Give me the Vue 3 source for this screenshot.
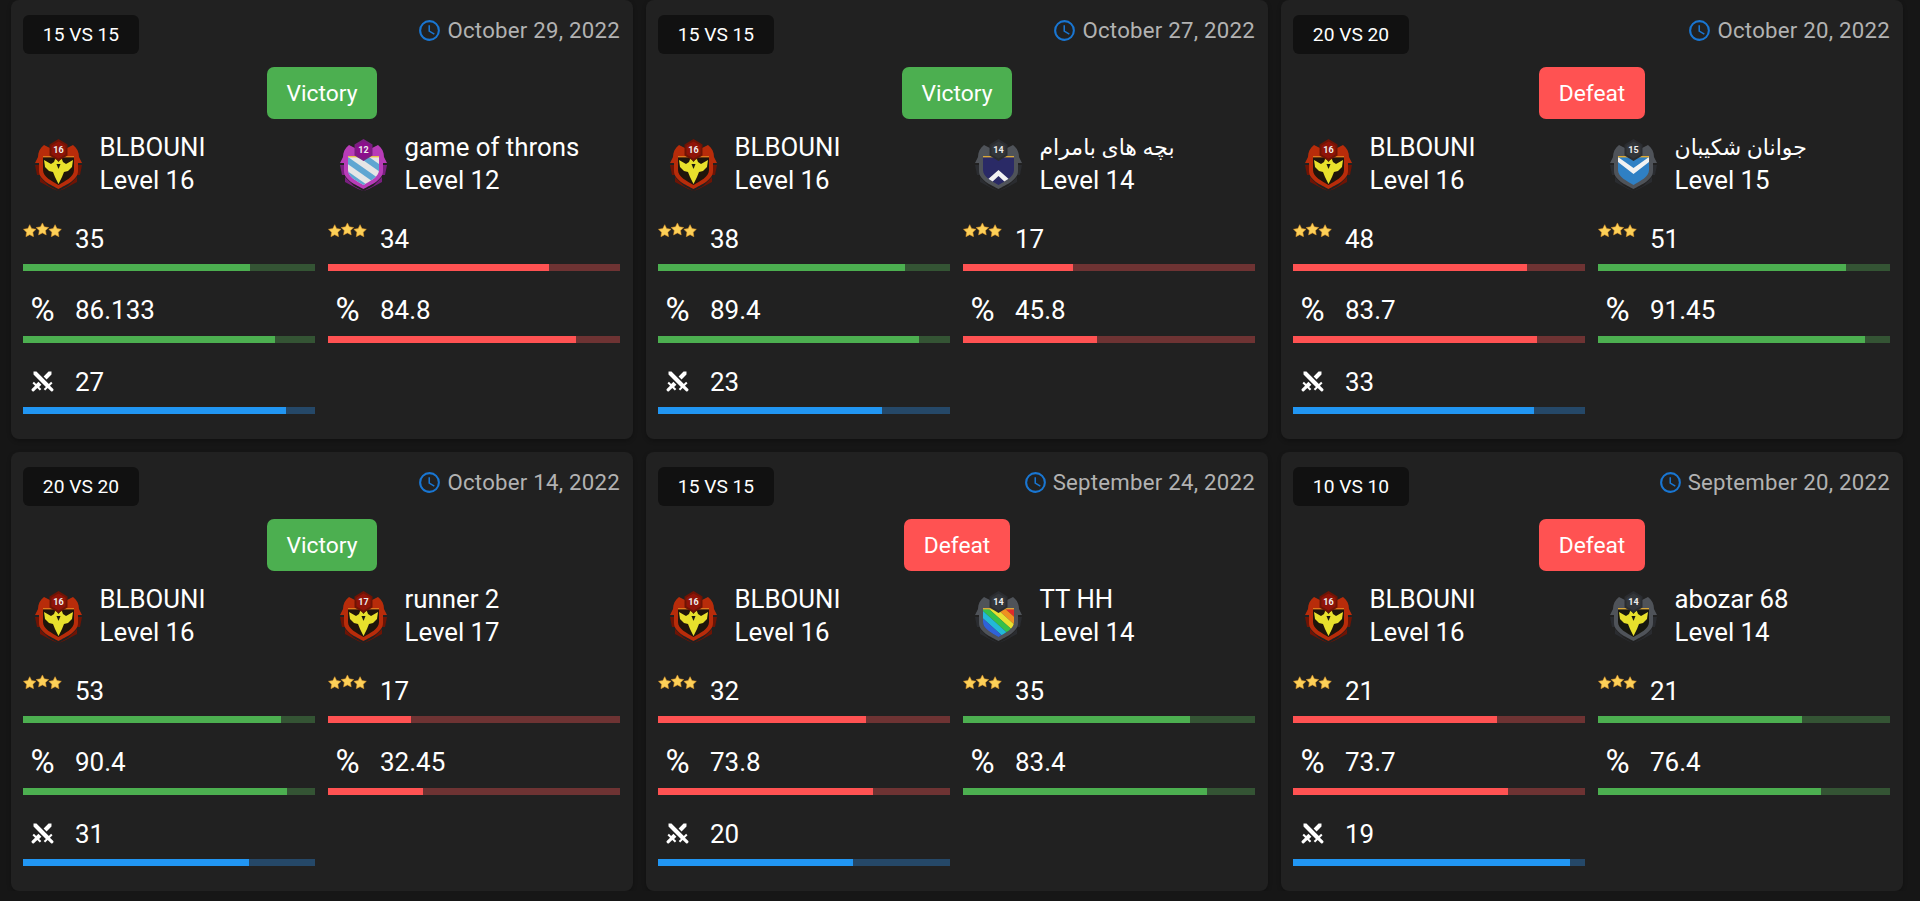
<script setup>
const crestKinds = {
  red: { frame: '#b82c0a', dark: '#6e1405', hex: '#8f1408', inner: '#1f150b', trim: '#e0781c', art: 'bird' },
  pink: { frame: '#b83cb8', dark: '#7a1f80', hex: '#8c0f8c', inner: '#e6e6e6', trim: '#e8c04a', art: 'stripes' },
  navy: { frame: '#4f5359', dark: '#2a2c30', hex: '#33363a', inner: '#2a2a66', trim: '#d9a93a', art: 'chevron-up' },
  blue: { frame: '#4f5359', dark: '#2a2c30', hex: '#33363a', inner: '#2f80c4', trim: '#e0aa30', art: 'chevron-down' },
  rainbow: { frame: '#4f5359', dark: '#2a2c30', hex: '#33363a', inner: '#444', trim: '#d9a93a', art: 'rainbow' },
  grey: { frame: '#4f5359', dark: '#2a2c30', hex: '#33363a', inner: '#17170f', trim: '#d9a93a', art: 'bird' }
}

const rainbow = ['#e02a2a', '#f09020', '#e8e030', '#35c04a', '#22b8d8', '#2f62d8', '#7a2fc0']

const matches = [
  {
    size: 15, date: 'October 29, 2022', result: 'Victory', attacks: 27,
    home: { name: 'BLBOUNI', level: 16, crest: 'red', stars: 35, pct: '86.133' },
    away: { name: 'game of throns', level: 12, crest: 'pink', stars: 34, pct: '84.8' }
  },
  {
    size: 15, date: 'October 27, 2022', result: 'Victory', attacks: 23,
    home: { name: 'BLBOUNI', level: 16, crest: 'red', stars: 38, pct: '89.4' },
    away: { name: 'بچه های بامرام', rtl: true, level: 14, crest: 'navy', stars: 17, pct: '45.8' }
  },
  {
    size: 20, date: 'October 20, 2022', result: 'Defeat', attacks: 33,
    home: { name: 'BLBOUNI', level: 16, crest: 'red', stars: 48, pct: '83.7' },
    away: { name: 'جوانان شکیبان', rtl: true, level: 15, crest: 'blue', stars: 51, pct: '91.45' }
  },
  {
    size: 20, date: 'October 14, 2022', result: 'Victory', attacks: 31,
    home: { name: 'BLBOUNI', level: 16, crest: 'red', stars: 53, pct: '90.4' },
    away: { name: 'runner 2', level: 17, crest: 'red', stars: 17, pct: '32.45' }
  },
  {
    size: 15, date: 'September 24, 2022', result: 'Defeat', attacks: 20,
    home: { name: 'BLBOUNI', level: 16, crest: 'red', stars: 32, pct: '73.8' },
    away: { name: 'TT HH', level: 14, crest: 'rainbow', stars: 35, pct: '83.4' }
  },
  {
    size: 10, date: 'September 20, 2022', result: 'Defeat', attacks: 19,
    home: { name: 'BLBOUNI', level: 16, crest: 'red', stars: 21, pct: '73.7' },
    away: { name: 'abozar 68', level: 14, crest: 'grey', stars: 21, pct: '76.4' }
  }
]

function sides(m) {
  const won = m.result === 'Victory'
  return [
    { ...m.home, id: 'h', tone: won ? 'green' : 'red', starWidth: (m.home.stars / (m.size * 3)) * 100, attackWidth: (m.attacks / (m.size * 2)) * 100, attacks: m.attacks },
    { ...m.away, id: 'a', tone: won ? 'red' : 'green', starWidth: (m.away.stars / (m.size * 3)) * 100 }
  ]
}
</script>

<template>
  <main class="page">
    <article v-for="(m, i) in matches" :key="i" class="card">
      <header class="card-top">
        <span class="size-tag">{{ m.size }} VS {{ m.size }}</span>
        <span class="date">
          <svg class="clock" viewBox="0 0 24 24"><path d="M12,20A8,8 0 0,0 20,12A8,8 0 0,0 12,4A8,8 0 0,0 4,12A8,8 0 0,0 12,20M12,2A10,10 0 0,1 22,12A10,10 0 0,1 12,22C6.47,22 2,17.5 2,12A10,10 0 0,1 12,2M12.5,7V12.25L17,14.92L16.25,16.15L11,13V7H12.5Z" /></svg>
          {{ m.date }}
        </span>
      </header>

      <div class="result-row">
        <span class="result" :class="m.result === 'Victory' ? 'win' : 'lose'">{{ m.result }}</span>
      </div>

      <div class="sides">
        <section v-for="s in sides(m)" :key="s.id" class="side">
          <div class="clan">
            <svg class="crest" viewBox="0 0 49 52">
              <defs>
                <clipPath :id="`shield-${i}-${s.id}`">
                  <path d="M9 17H40V31C40 38 31 42 24.5 46 18 42 9 38 9 31Z" />
                </clipPath>
              </defs>
              <!-- shoulders and side flanges -->
              <path d="M4 18C4 13 6 9 10 6L20 11V16H10L8 24H1ZM45 18C45 13 43 9 39 6L29 11V16H39L41 24H48Z" :fill="crestKinds[s.crest].frame" />
              <path d="M1 26H6V36H3ZM48 26H43V36H46Z" :fill="crestKinds[s.crest].dark" />
              <path d="M6 38 15 47 24.5 52 34 47 43 38 43 43 30 50 24.5 52 19 50 6 43Z" :fill="crestKinds[s.crest].dark" />
              <path d="M5 14H44V32C44 41 32 46 24.5 50 17 46 5 41 5 32Z" :fill="crestKinds[s.crest].frame" />
              <path d="M9 17H40V31C40 38 31 42 24.5 46 18 42 9 38 9 31Z" :fill="crestKinds[s.crest].inner" />
              <g :clip-path="`url(#shield-${i}-${s.id})`">
                <template v-if="crestKinds[s.crest].art === 'bird'">
                  <path d="M10 21 17 25 20 23 21.5 19 24.5 23 27.5 19 29 23 32 25 39 21 38 28 34 32 30 33 28 38 24.5 45 21 38 19 33 15 32 11 28Z" fill="#e8e02c" />
                  <path d="M22.5 25H26.5L24.5 30Z" fill="#17170f" />
                </template>
                <g v-else-if="crestKinds[s.crest].art === 'stripes'" transform="rotate(35 24.5 30)" fill="#5fa6d2">
                  <rect x="0" y="17" width="50" height="6" />
                  <rect x="0" y="29" width="50" height="6" />
                  <rect x="0" y="41" width="50" height="6" />
                </g>
                <path v-else-if="crestKinds[s.crest].art === 'chevron-up'" d="M12 42 24.5 31 37 42 33 45 24.5 37 16 45Z" fill="#f2f2f2" />
                <path v-else-if="crestKinds[s.crest].art === 'chevron-down'" d="M9 18 24.5 29 40 18V23L24.5 35 9 23Z" fill="#f2f2f2" />
                <g v-else transform="rotate(42 24.5 30)">
                  <rect v-for="(c, n) in rainbow" :key="n" x="0" :y="11 + n * 5.5" width="50" height="5.5" :fill="c" />
                </g>
              </g>
              <path d="M9 17H40V18.4H9Z" :fill="crestKinds[s.crest].trim" />
              <polygon points="24.5,0 33.5,5.5 33.5,16.5 24.5,22 15.5,16.5 15.5,5.5" :fill="crestKinds[s.crest].dark" />
              <polygon points="24.5,2.5 31.5,6.5 31.5,15.5 24.5,19.5 17.5,15.5 17.5,6.5" :fill="crestKinds[s.crest].hex" />
              <text class="crest-level" x="24.5" y="14.3" text-anchor="middle">{{ s.level }}</text>
            </svg>
            <div class="clan-text">
              <div class="clan-name" :class="{ rtl: s.rtl }">{{ s.name }}</div>
              <div>Level {{ s.level }}</div>
            </div>
          </div>

          <div class="stat">
            <div class="stat-row">
              <span class="stat-icon stars">
                <svg width="40" height="15" viewBox="0 0 40 15">
                  <g fill="#fdd058" stroke="#d9932a" stroke-width=".5">
                    <path transform="translate(0 2) scale(1.15)" d="M6 .5 7.7 4 11.6 4.6 8.8 7.3 9.4 11.2 6 9.4 2.6 11.2 3.2 7.3 .4 4.6 4.3 4Z" />
                    <path transform="translate(26 2) scale(1.15)" d="M6 .5 7.7 4 11.6 4.6 8.8 7.3 9.4 11.2 6 9.4 2.6 11.2 3.2 7.3 .4 4.6 4.3 4Z" />
                    <path transform="translate(13 .2) scale(1.15)" d="M6 .5 7.7 4 11.6 4.6 8.8 7.3 9.4 11.2 6 9.4 2.6 11.2 3.2 7.3 .4 4.6 4.3 4Z" />
                  </g>
                </svg>
              </span>
              <span class="stat-value">{{ s.stars }}</span>
            </div>
            <div class="bar" :class="s.tone"><i :style="{ width: s.starWidth + '%' }"></i></div>
          </div>

          <div class="stat">
            <div class="stat-row">
              <span class="stat-icon percent">%</span>
              <span class="stat-value">{{ s.pct }}</span>
            </div>
            <div class="bar" :class="s.tone"><i :style="{ width: s.pct + '%' }"></i></div>
          </div>

          <div v-if="s.attacks" class="stat">
            <div class="stat-row">
              <span class="stat-icon">
                <svg class="swords" viewBox="0 0 24 24"><path d="M6.2,2.44L18.1,14.34L20.22,12.22L21.63,13.63L19.16,16.1L22.34,19.28C22.73,19.67 22.73,20.3 22.34,20.69L21.63,21.4C21.24,21.79 20.61,21.79 20.22,21.4L17,18.23L14.56,20.7L13.15,19.29L15.27,17.17L3.37,5.27V2.44H6.2M15.89,10L20.63,5.26V2.44H17.8L13.06,7.18L15.89,10M10.94,15L8.11,12.13L5.9,14.34L3.78,12.22L2.37,13.63L4.84,16.1L1.66,19.29C1.27,19.68 1.27,20.31 1.66,20.7L2.37,21.41C2.76,21.8 3.39,21.8 3.78,21.41L7,18.23L9.44,20.7L10.85,19.29L8.73,17.17L10.94,15Z" /></svg>
              </span>
              <span class="stat-value">{{ s.attacks }}</span>
            </div>
            <div class="bar blue"><i :style="{ width: s.attackWidth + '%' }"></i></div>
          </div>
        </section>
      </div>
    </article>
  </main>
</template>

<style scoped>
.page {
  display: grid;
  grid-template-columns: repeat(3, 622px);
  grid-auto-rows: 439px;
  gap: 13px;
  padding: 0 17px 0 11px;
  font-family: Roboto, "DejaVu Sans", sans-serif;
  color: #fff;
}

.card {
  background: #212121;
  border-radius: 8px;
  padding: 15px 12px 0;
  box-sizing: border-box;
  box-shadow: 0 2px 4px rgba(0, 0, 0, 0.25);
}

.card-top {
  display: flex;
  justify-content: space-between;
  align-items: flex-start;
}

.size-tag {
  width: 116px;
  height: 39px;
  display: flex;
  align-items: center;
  justify-content: center;
  background: #111;
  border-radius: 6px;
  font-size: 19.2px;
}

.date {
  display: flex;
  align-items: center;
  gap: 5px;
  color: #b2b2b2;
  font-size: 22.2px;
  line-height: 25px;
  letter-spacing: 0.25px;
  height: 30px;
  padding-right: 1px;
}

.clock {
  width: 25px;
  height: 25px;
  fill: #1976d2;
}

.result-row {
  display: flex;
  justify-content: center;
  margin-top: 13px;
}

.result {
  height: 52px;
  padding: 0 19.5px;
  display: flex;
  align-items: center;
  border-radius: 7px;
  font-size: 22.8px;
}

.win {
  background: #4caf50;
}

.lose {
  background: #ff5252;
}

.sides {
  display: grid;
  grid-template-columns: 292px 292px;
  gap: 13px;
  margin-top: 20px;
}

.clan {
  display: flex;
  align-items: center;
  height: 52px;
  padding-left: 11px;
  margin-bottom: 8.5px;
}

.crest {
  width: 49px;
  height: 52px;
  flex: none;
}

.crest-level {
  font-size: 9px;
  font-weight: 700;
  fill: #eee;
}

.clan-text {
  margin-left: 16.5px;
  margin-top: -2px;
  font-size: 25.8px;
  line-height: 33px;
  white-space: nowrap;
}

.clan-name {
  unicode-bidi: plaintext;
}

.clan-name.rtl {
  font-size: 22px;
  direction: rtl;
  text-align: left;
}

.stat {
  height: 71.5px;
  display: flex;
  flex-direction: column;
  justify-content: flex-end;
}

.stat-row {
  display: flex;
  align-items: center;
  height: 40px;
  margin-bottom: 6px;
}

.stat-icon {
  width: 39px;
  height: 40px;
  flex: none;
  display: flex;
  align-items: center;
  justify-content: center;
  margin-right: 13px;
}

.stars {
  align-items: flex-start;
  padding-top: 4px;
  box-sizing: border-box;
}

.percent {
  font-size: 33px;
}

.swords {
  width: 25px;
  height: 25px;
  fill: #fff;
}

.stat-value {
  font-size: 26px;
  position: relative;
  top: 0.5px;
}

.bar {
  height: 7px;
  position: relative;
}

.bar i {
  display: block;
  height: 100%;
}

.bar.green {
  background: #345434;
}

.bar.green i {
  background: #4caf50;
}

.bar.red {
  background: #6e3333;
}

.bar.red i {
  background: #ff5252;
}

.bar.blue {
  background: #254868;
}

.bar.blue i {
  background: #2196f3;
}
</style>

<style>
html,
body {
  background: #161616;
  overflow: hidden;
}
</style>
